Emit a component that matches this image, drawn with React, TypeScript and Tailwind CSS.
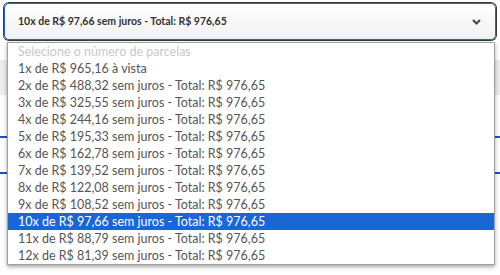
import { useState } from 'react'

const options = [
  '1x de R$ 965,16 à vista',
  '2x de R$ 488,32 sem juros - Total: R$ 976,65',
  '3x de R$ 325,55 sem juros - Total: R$ 976,65',
  '4x de R$ 244,16 sem juros - Total: R$ 976,65',
  '5x de R$ 195,33 sem juros - Total: R$ 976,65',
  '6x de R$ 162,78 sem juros - Total: R$ 976,65',
  '7x de R$ 139,52 sem juros - Total: R$ 976,65',
  '8x de R$ 122,08 sem juros - Total: R$ 976,65',
  '9x de R$ 108,52 sem juros - Total: R$ 976,65',
  '10x de R$ 97,66 sem juros - Total: R$ 976,65',
  '11x de R$ 88,79 sem juros - Total: R$ 976,65',
  '12x de R$ 81,39 sem juros - Total: R$ 976,65',
]

export default function App() {
  const [selected, setSelected] = useState(9)

  return (
    <div className="relative w-[500px] h-[275px] bg-white overflow-hidden font-['Lato','Open_Sans',sans-serif]">
      <div className="pt-[3px] px-[4px]">
        <div className="h-[37px] flex items-center justify-between pl-[13px] pr-[14px] rounded-[5px] border border-[#2f5fd0] ring-1 ring-[#3a3a3a] bg-gradient-to-b from-white to-[#f1f1f1]">
          <span className="text-[10.5px] font-bold text-[#333]">{options[selected]}</span>
          <svg width="9" height="6" viewBox="0 0 9 6" className="text-[#444]">
            <path d="M1 1l3.5 3.5L8 1" fill="none" stroke="currentColor" strokeWidth="2" />
          </svg>
        </div>
      </div>

      {/* page content behind the open list */}
      <div className="mt-[20px] h-[35px] bg-[#ececec]" />
      <div className="mt-[41px] h-[2px] bg-[#1d4fc4]" />
      <div className="mt-[34px] h-[2px] bg-[#1d4fc4]" />

      <div className="absolute left-[7px] top-[42px] w-[488px] border border-[#a0a0a0] bg-white shadow-[0_2px_4px_rgba(0,0,0,0.35)]">
        <div className="h-[17px] leading-[17px] pl-[10px] text-[12.5px] text-[#c8c8c8]">
          Selecione o número de parcelas
        </div>
        {options.map((o, i) => (
          <div
            key={o}
            onClick={() => setSelected(i)}
            className={
              i === selected
                ? 'h-[17px] leading-[17px] pl-[10px] text-[12.5px] bg-[#1a66d4] text-white'
                : 'h-[17px] leading-[17px] pl-[10px] text-[12.5px] text-[#555]'
            }
          >
            {o}
          </div>
        ))}
      </div>
    </div>
  )
}
